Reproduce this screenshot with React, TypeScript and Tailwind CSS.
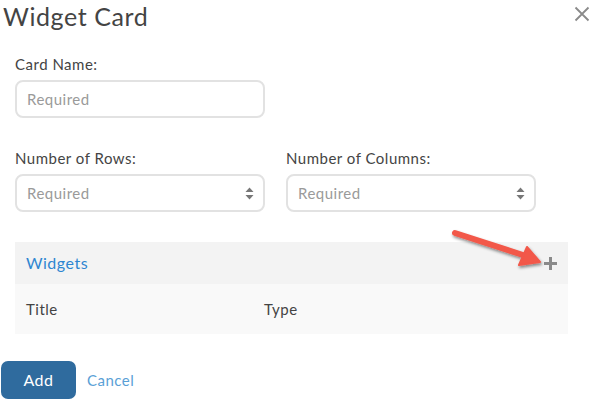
import React from "react";

function Field({ label, select }: { label: string; select?: boolean }) {
  return (
    <div className="flex flex-col w-[250px]">
      <label className="text-[15px] leading-[18px] text-[#444] tracking-[0.5px]">{label}</label>
      <div className="mt-[7px] h-[38px] rounded-[8px] border-2 border-[#e2e2e2] flex items-center justify-between pl-[10px] pr-[9px]">
        <span className="text-[15px] text-[#9a9a9a] tracking-[0.5px]">Required</span>
        {select && (
          <svg width="9" height="13" viewBox="0 0 9 13">
            <path d="M4.5 0.5 L8.5 5 L0.5 5 Z" fill="#777" />
            <path d="M4.5 12.5 L8.5 8 L0.5 8 Z" fill="#777" />
          </svg>
        )}
      </div>
    </div>
  );
}

export default function App() {
  return (
    <div
      className="relative w-[595px] h-[402px] bg-white overflow-hidden"
      style={{ fontFamily: "Lato, 'Noto Sans', sans-serif" }}
    >
      <div className="flex items-start justify-between pl-[3px] pr-[5px] pt-[0px]">
        <h1 className="text-[25px] leading-[32px] text-[#444] font-normal tracking-[0.6px]">Widget Card</h1>
        <svg width="16" height="16" viewBox="0 0 16 16" className="mt-[6px]">
          <path d="M1.5 1.5 L14.5 14.5 M14.5 1.5 L1.5 14.5" stroke="#8a8a8a" strokeWidth="1.8" />
        </svg>
      </div>

      <div className="pl-[15px] mt-[23px]">
        <Field label="Card Name:" />
      </div>

      <div className="pl-[15px] mt-[31px] flex gap-[21px]">
        <Field label="Number of Rows:" select />
        <Field label="Number of Columns:" select />
      </div>

      <div className="ml-[15px] w-[553px] mt-[30px]">
        <div className="h-[42px] bg-[#f3f3f3] flex items-center justify-between pl-[11px] pr-[10px]">
          <span className="text-[16px] text-[#2e86d1] tracking-[0.5px]">Widgets</span>
          <svg width="15" height="15" viewBox="0 0 15 15" className="mt-[1px]">
            <path d="M7.5 1 V14 M1 7.5 H14" stroke="#8a8a8a" strokeWidth="3" />
          </svg>
        </div>
        <div className="h-[50px] bg-[#f9f9f9] flex items-center pl-[11px] text-[15px] text-[#444] tracking-[0.5px]">
          <span className="w-[238px]">Title</span>
          <span>Type</span>
        </div>
      </div>

      <div className="flex items-center mt-[27px] pl-[1px] gap-[11px]">
        <button className="w-[75px] h-[38px] rounded-[7px] bg-[#2f6b9e] text-white text-[16px] tracking-[0.5px]">Add</button>
        <span className="text-[15px] text-[#5a9fd6] tracking-[0.5px]">Cancel</span>
      </div>

      <svg className="absolute left-0 top-0 pointer-events-none" width="595" height="402" viewBox="0 0 595 402">
        <defs>
          <filter id="sh" x="-20%" y="-20%" width="140%" height="140%">
            <feDropShadow dx="1" dy="2" stdDeviation="1.5" floodColor="#000" floodOpacity="0.45" />
          </filter>
        </defs>
        <g filter="url(#sh)">
          <path d="M455 233 L526 256" stroke="#f2584a" strokeWidth="6" strokeLinecap="round" />
          <path d="M540 262 L519 265 L527 247 Z" fill="#f2584a" stroke="#f2584a" strokeWidth="2" strokeLinejoin="round" />
        </g>
      </svg>
    </div>
  );
}
